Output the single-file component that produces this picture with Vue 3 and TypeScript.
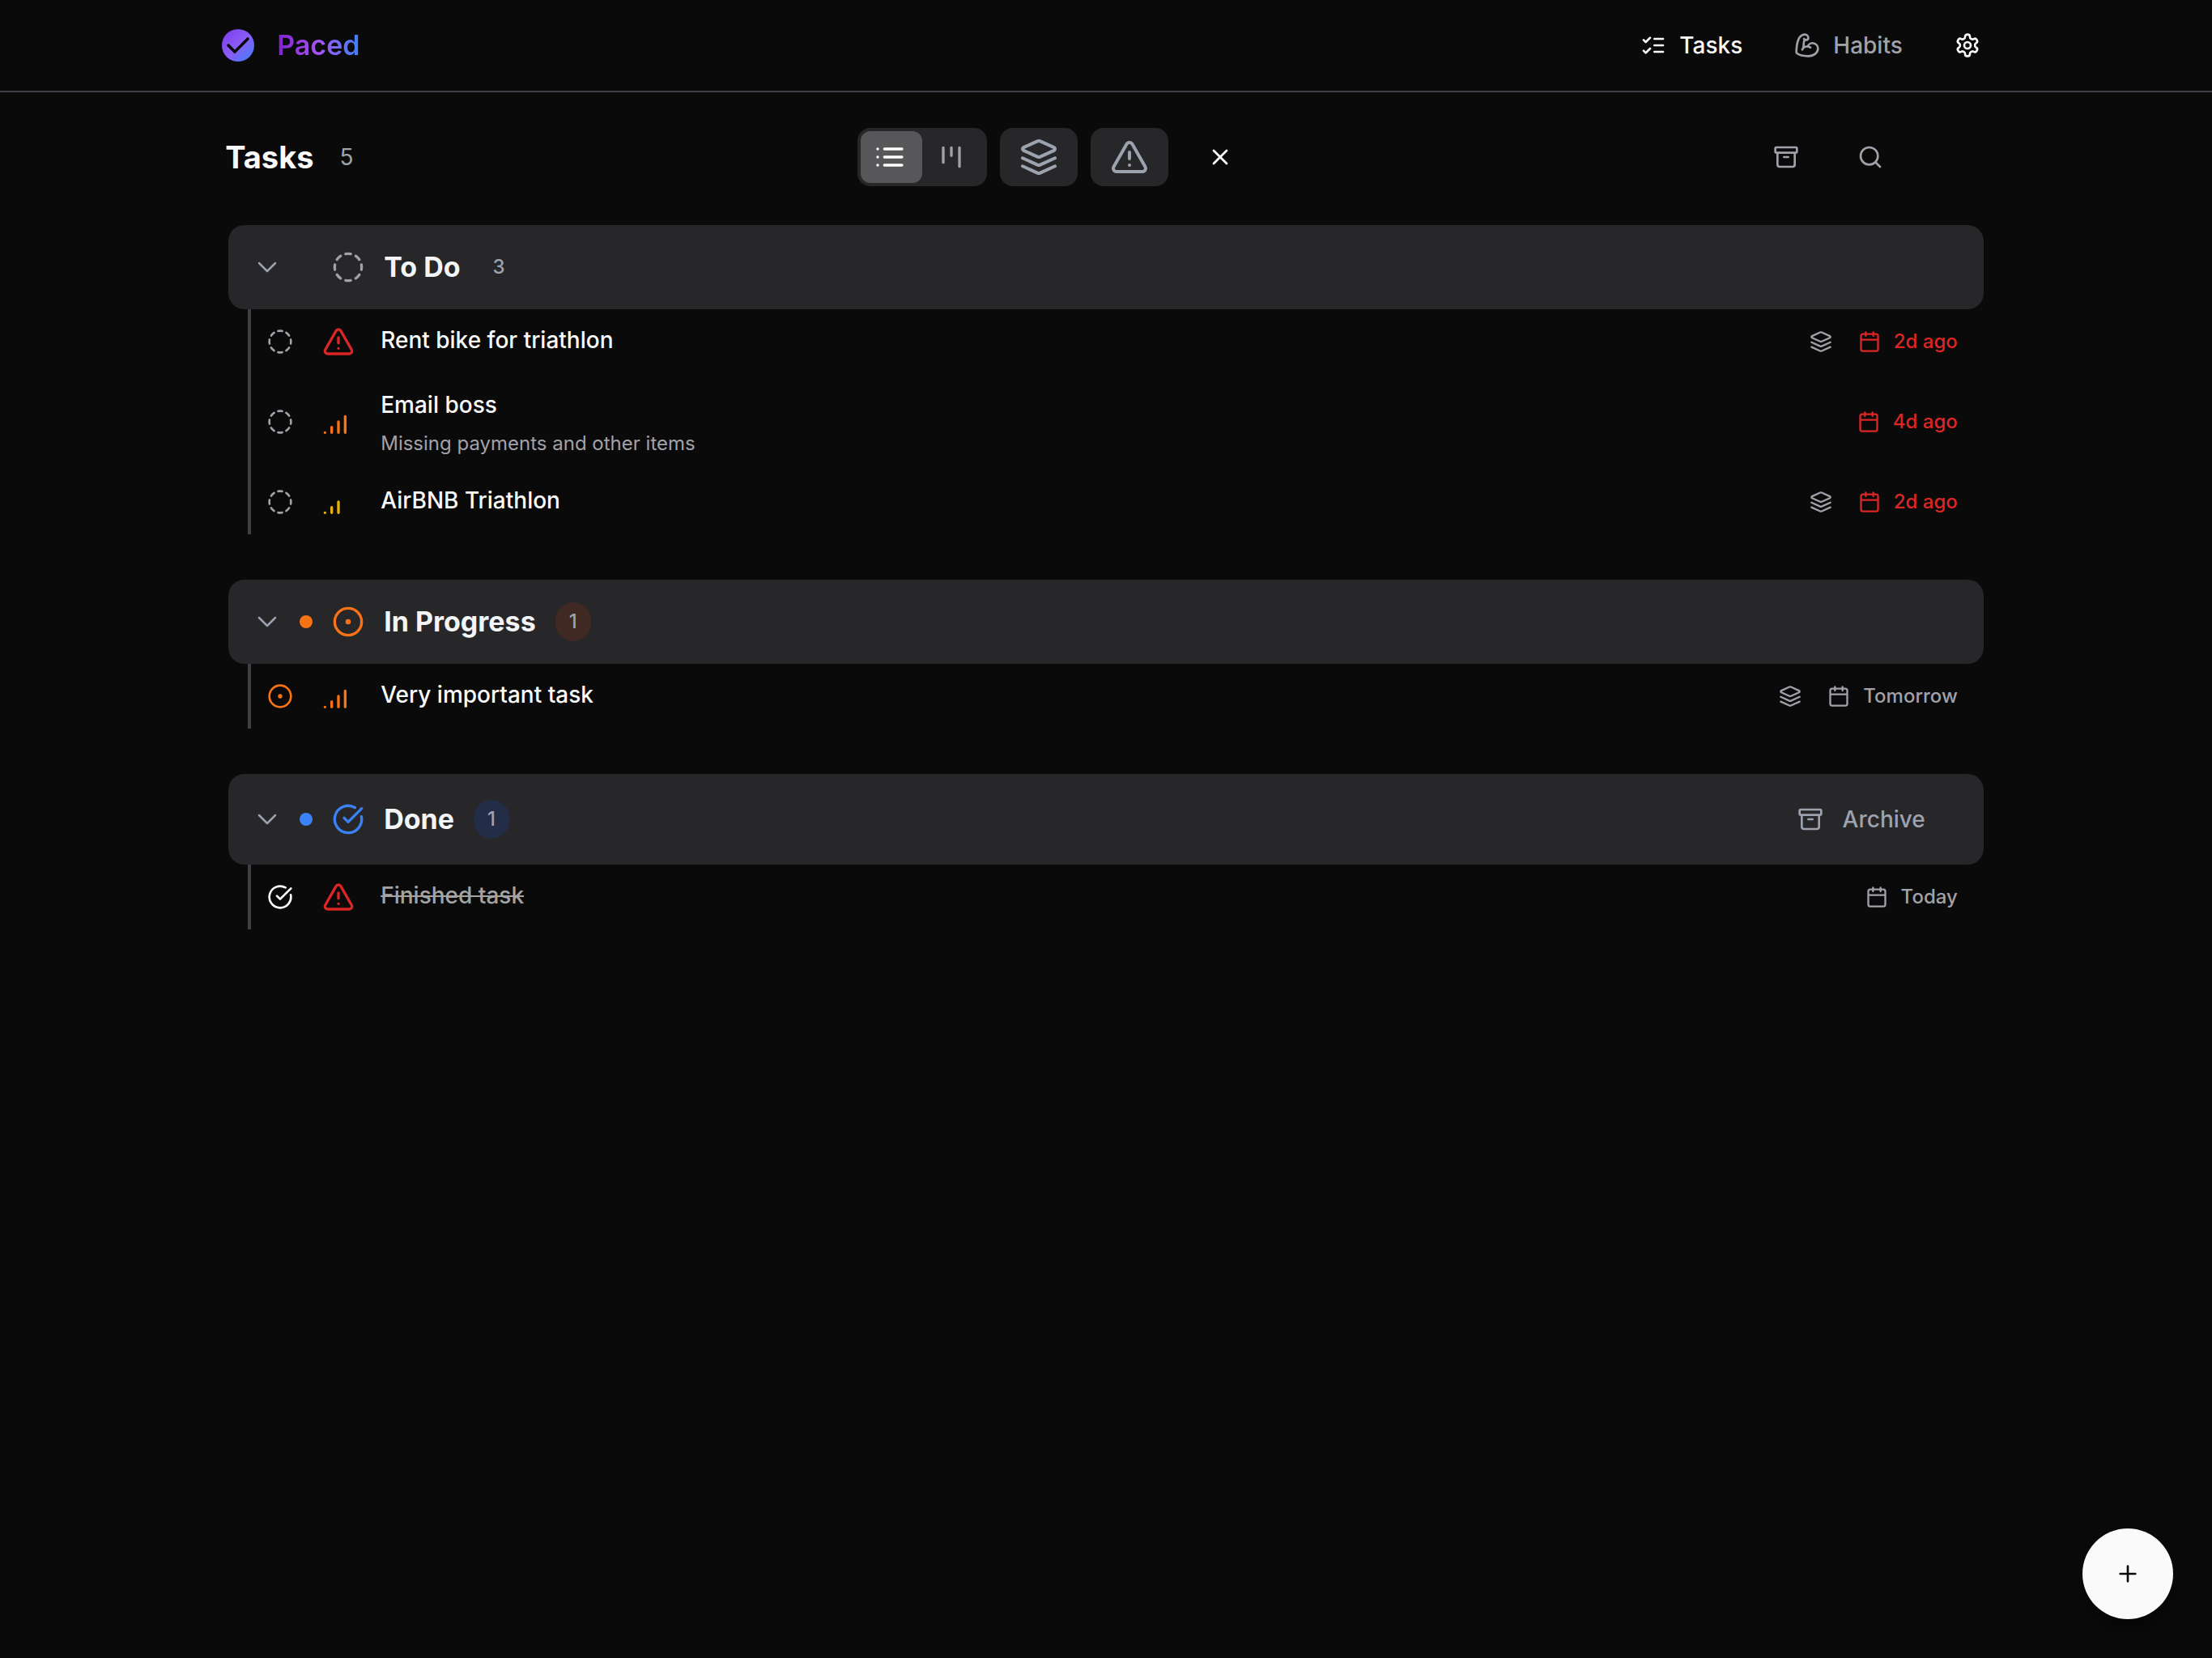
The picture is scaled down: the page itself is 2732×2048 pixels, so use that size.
<script setup lang="ts">
import { defineComponent, h, ref } from 'vue'

type IconName = keyof typeof glyphs
type Status = 'todo' | 'progress' | 'done'

interface Task {
  title: string
  note?: string
  priority: 'urgent' | 'high' | 'medium'
  grouped?: boolean
  due: string
  overdue?: boolean
}

interface Section {
  status: Status
  label: string
  icon: IconName
  tasks: Task[]
}

const glyphs = {
  listChecks: 'm3 17 2 2 4-4M3 7l2 2 4-4M13 6h8M13 12h8M13 18h8',
  biceps:
    'M12.409 13.017A5 5 0 0 1 22 15c0 3.866-4 7-9 7-4.077 0-8.153-.82-10.371-2.462-.426-.316-.631-.832-.62-1.362C2.118 12.723 2.627 2 10 2a3 3 0 0 1 3 3 2 2 0 0 1-2 2c-1.105 0-1.64-.444-2-1M15 14a5 5 0 0 0-7.584 2M9.964 6.825C8.019 7.977 9.5 13 8 15',
  settings:
    'M12.22 2h-.44a2 2 0 0 0-2 2v.18a2 2 0 0 1-1 1.73l-.43.25a2 2 0 0 1-2 0l-.15-.08a2 2 0 0 0-2.73.73l-.22.38a2 2 0 0 0 .73 2.73l.15.1a2 2 0 0 1 1 1.72v.51a2 2 0 0 1-1 1.74l-.15.09a2 2 0 0 0-.73 2.73l.22.38a2 2 0 0 0 2.73.73l.15-.08a2 2 0 0 1 2 0l.43.25a2 2 0 0 1 1 1.73V20a2 2 0 0 0 2 2h.44a2 2 0 0 0 2-2v-.18a2 2 0 0 1 1-1.73l.43-.25a2 2 0 0 1 2 0l.15.08a2 2 0 0 0 2.73-.73l.22-.39a2 2 0 0 0-.73-2.73l-.15-.08a2 2 0 0 1-1-1.74v-.5a2 2 0 0 1 1-1.74l.15-.09a2 2 0 0 0 .73-2.73l-.22-.38a2 2 0 0 0-2.73-.73l-.15.08a2 2 0 0 1-2 0l-.43-.25a2 2 0 0 1-1-1.73V4a2 2 0 0 0-2-2zM9 12a3 3 0 1 0 6 0a3 3 0 1 0-6 0',
  list: 'M3 6h.01M3 12h.01M3 18h.01M8 6h13M8 12h13M8 18h13',
  kanban: 'M6 5v11M12 5v6M18 5v14',
  layers:
    'm12.83 2.18a2 2 0 0 0-1.66 0L2.6 6.08a1 1 0 0 0 0 1.83l8.58 3.91a2 2 0 0 0 1.66 0l8.58-3.9a1 1 0 0 0 0-1.83ZM22 17.65l-9.17 4.16a2 2 0 0 1-1.66 0L2 17.65M22 12.65l-9.17 4.16a2 2 0 0 1-1.66 0L2 12.65',
  urgent:
    'm21.73 18-8-14a2 2 0 0 0-3.48 0l-8 14A2 2 0 0 0 4 21h16a2 2 0 0 0 1.73-3ZM12 9v4M12 17h.01',
  high: 'M2 20h.01M7 20v-4M12 20v-8M17 20V8',
  medium: 'M2 20h.01M7 20v-4M12 20v-8',
  close: 'M18 6 6 18M6 6l12 12',
  archive:
    'M3 3h18a1 1 0 0 1 1 1v3a1 1 0 0 1-1 1H3a1 1 0 0 1-1-1V4a1 1 0 0 1 1-1zM4 8v11a2 2 0 0 0 2 2h12a2 2 0 0 0 2-2V8M10 12h4',
  search: 'M3 11a8 8 0 1 0 16 0a8 8 0 1 0-16 0M21 21l-4.3-4.3',
  chevron: 'm6 9 6 6 6-6',
  todo:
    'M10.1 2.182a10 10 0 0 1 3.8 0M13.9 21.818a10 10 0 0 1-3.8 0M17.609 3.721a10 10 0 0 1 2.69 2.7M2.182 13.9a10 10 0 0 1 0-3.8M20.279 17.609a10 10 0 0 1-2.7 2.69M21.818 10.1a10 10 0 0 1 0 3.8M3.721 6.391a10 10 0 0 1 2.7-2.69M6.391 20.279a10 10 0 0 1-2.69-2.7',
  progress: 'M2 12a10 10 0 1 0 20 0a10 10 0 1 0-20 0M11 12a1 1 0 1 0 2 0a1 1 0 1 0-2 0',
  done: 'M21.801 10A10 10 0 1 1 17 3.335M9 11l3 3L22 4',
  calendar: 'M8 2v4M16 2v4M5 4h14a2 2 0 0 1 2 2v14a2 2 0 0 1-2 2H5a2 2 0 0 1-2-2V6a2 2 0 0 1 2-2zM3 10h18',
  plus: 'M5 12h14M12 5v14',
}

const Icon = defineComponent({
  props: {
    name: { type: String, required: true },
    size: { type: Number, default: 32 },
    stroke: { type: Number, default: 2 },
  },
  setup(props) {
    return () =>
      h(
        'svg',
        {
          width: props.size,
          height: props.size,
          viewBox: '0 0 24 24',
          fill: 'none',
          stroke: 'currentColor',
          'stroke-width': props.stroke,
          'stroke-linecap': 'round',
          'stroke-linejoin': 'round',
          'aria-hidden': 'true',
        },
        [h('path', { d: glyphs[props.name as IconName] })],
      )
  },
})

const sections: Section[] = [
  {
    status: 'todo',
    label: 'To Do',
    icon: 'todo',
    tasks: [
      { title: 'Rent bike for triathlon', priority: 'urgent', grouped: true, due: '2d ago', overdue: true },
      { title: 'Email boss', note: 'Missing payments and other items', priority: 'high', due: '4d ago', overdue: true },
      { title: 'AirBNB Triathlon', priority: 'medium', grouped: true, due: '2d ago', overdue: true },
    ],
  },
  {
    status: 'progress',
    label: 'In Progress',
    icon: 'progress',
    tasks: [{ title: 'Very important task', priority: 'high', grouped: true, due: 'Tomorrow' }],
  },
  {
    status: 'done',
    label: 'Done',
    icon: 'done',
    tasks: [{ title: 'Finished task', priority: 'urgent', due: 'Today' }],
  },
]

const total = sections.reduce((sum, s) => sum + s.tasks.length, 0)
const view = ref<'list' | 'board'>('list')
const collapsed = ref<Record<Status, boolean>>({ todo: false, progress: false, done: false })
</script>

<template>
  <div class="app">
    <header class="topbar">
      <div class="topbar-inner">
        <a class="brand" href="#">
          <svg class="brand-mark" width="40" height="40" viewBox="0 0 40 40" aria-hidden="true">
            <defs>
              <linearGradient id="brand-fill" x1="0" y1="0" x2="1" y2="1">
                <stop offset="0" stop-color="#7c3aed" />
                <stop offset="0.5" stop-color="#8b5cf6" />
                <stop offset="1" stop-color="#3b82f6" />
              </linearGradient>
            </defs>
            <circle cx="20" cy="20" r="20" fill="url(#brand-fill)" />
            <path d="M8 20 16 28 32 12" fill="none" stroke="#0a0a0a" stroke-width="3.6" stroke-linecap="round" />
          </svg>
          <span class="brand-name">Paced</span>
        </a>
        <nav class="nav">
          <a class="nav-link active" href="#tasks"><Icon name="listChecks" />Tasks</a>
          <a class="nav-link" href="#habits"><Icon name="biceps" />Habits</a>
          <button class="plain bright" type="button" aria-label="Settings"><Icon name="settings" /></button>
        </nav>
      </div>
    </header>

    <main class="main">
      <div class="toolbar">
        <div class="heading">
          <h1>Tasks</h1>
          <span class="total">{{ total }}</span>
        </div>
        <div class="filters">
          <div class="segmented">
            <button type="button" :class="{ on: view === 'list' }" aria-label="List view" @click="view = 'list'">
              <Icon name="list" :size="40" />
            </button>
            <button type="button" :class="{ on: view === 'board' }" aria-label="Board view" @click="view = 'board'">
              <Icon name="kanban" :size="40" />
            </button>
          </div>
          <button class="filter" type="button" aria-label="Filter by group"><Icon name="layers" :size="48" /></button>
          <button class="filter" type="button" aria-label="Filter by priority"><Icon name="urgent" :size="48" /></button>
          <button class="filter clear" type="button" aria-label="Clear filters"><Icon name="close" /></button>
        </div>
        <div class="actions">
          <button class="plain" type="button" aria-label="Archived tasks"><Icon name="archive" /></button>
          <button class="plain" type="button" aria-label="Search"><Icon name="search" /></button>
        </div>
      </div>

      <section v-for="s in sections" :key="s.status" class="section" :class="s.status">
        <div class="section-head">
          <button
            class="plain toggle"
            type="button"
            :aria-label="`Toggle ${s.label}`"
            @click="collapsed[s.status] = !collapsed[s.status]"
          >
            <Icon name="chevron" :size="40" :stroke="1.5" />
          </button>
          <span class="dot"></span>
          <Icon class="section-icon" :name="s.icon" :size="40" />
          <h2>{{ s.label }}</h2>
          <span class="count">{{ s.tasks.length }}</span>
          <button v-if="s.status === 'done'" class="plain archive" type="button"><Icon name="archive" />Archive</button>
        </div>
        <ul v-if="!collapsed[s.status]" class="tasks">
          <li v-for="t in s.tasks" :key="t.title" class="task">
            <button class="plain status" type="button" :aria-label="`Change status of ${t.title}`">
              <Icon :name="s.icon" />
            </button>
            <Icon class="priority" :class="t.priority" :name="t.priority" :size="40" />
            <div class="task-body" :class="{ noted: t.note }">
              <span class="task-title">{{ t.title }}</span>
              <span v-if="t.note" class="task-note">{{ t.note }}</span>
            </div>
            <Icon v-if="t.grouped" class="grouped" name="layers" :size="28" />
            <span class="due" :class="{ overdue: t.overdue }"><Icon name="calendar" :size="28" />{{ t.due }}</span>
          </li>
        </ul>
      </section>
    </main>

    <button class="fab" type="button" aria-label="Add task"><Icon name="plus" /></button>
  </div>
</template>

<style>
body {
  background: #0a0a0a;
}
</style>

<style scoped>
.app {
  min-height: 100vh;
  background: #0a0a0a;
  color: #fafafa;
  font-family: Inter, 'Liberation Sans', sans-serif;
  font-size: 28px;
  line-height: 40px;
}

.app * {
  box-sizing: border-box;
}

svg {
  display: block;
  flex: none;
}

a {
  color: inherit;
  text-decoration: none;
}

button {
  display: flex;
  align-items: center;
  justify-content: center;
  margin: 0;
  padding: 0;
  border: 0;
  background: none;
  color: inherit;
  font: inherit;
  cursor: pointer;
}

h1,
h2 {
  margin: 0;
}

.plain {
  color: #a1a1aa;
}

.topbar {
  border-bottom: 2px solid #3f3f46;
}

.topbar-inner {
  display: flex;
  align-items: center;
  justify-content: space-between;
  width: 80%;
  height: 112px;
  margin: 0 auto;
  padding: 0 13px 0 1px;
}

.brand {
  display: flex;
  align-items: center;
  gap: 28px;
}

.brand-name {
  background: linear-gradient(to right, #7e22ce, #a855f7, #3b82f6);
  background-clip: text;
  color: transparent;
  font-size: 34px;
  font-weight: 600;
}

.nav {
  display: flex;
  align-items: center;
  gap: 64px;
}

.nav-link {
  display: flex;
  align-items: center;
  gap: 16px;
  color: #a1a1aa;
  font-weight: 500;
}

.nav-link.active,
.bright {
  color: #fafafa;
}

.main {
  width: 80%;
  margin: 0 auto;
  padding: 0 9px 160px;
}

.toolbar {
  display: flex;
  align-items: center;
  justify-content: space-between;
  height: 72px;
  margin: 44px -8px 48px;
}

.heading {
  display: flex;
  align-items: center;
  gap: 32px;
  padding: 0 20px 0 4px;
}

h1 {
  font-size: 38px;
  font-weight: 700;
}

.total {
  color: #a1a1aa;
}

.filters {
  display: flex;
  gap: 16px;
}

.segmented {
  display: flex;
  padding: 4px;
  border-radius: 16px;
  background: #27272a;
}

.segmented button {
  padding: 0 20px 0 16px;
  height: 64px;
  border-radius: 12px;
  color: #a1a1aa;
}

.segmented .on {
  background: #575759;
  color: #fff;
}

.filter {
  width: 96px;
  height: 72px;
  border-radius: 16px;
  background: #27272a;
  color: #9ca3af;
}

.filter.clear {
  background: none;
  color: #fff;
}

.actions {
  display: flex;
  gap: 8px;
  padding-right: 100px;
}

.actions button {
  width: 96px;
  height: 72px;
}

.section {
  margin-bottom: 56px;
}

.section-head {
  display: flex;
  align-items: center;
  min-height: 104px;
  padding: 0 72px 0 28px;
  border-radius: 20px;
  background: #27272a;
}

.done .section-head {
  min-height: 112px;
}

.toggle {
  color: #9ca3af;
}

.dot {
  width: 16px;
  height: 16px;
  margin: 0 24px 0 20px;
  border-radius: 50%;
}

.section-icon {
  margin-right: 24px;
  color: #a1a1aa;
}

.progress .dot {
  background: #f97316;
}

.progress .section-icon,
.progress .status {
  color: #f97316;
}

.done .dot {
  background: #3b82f6;
}

.done .section-icon {
  color: #3b82f6;
}

.done .status {
  color: #fafafa;
}

h2 {
  color: #f3f4f6;
  font-size: 34px;
  font-weight: 700;
}

.count {
  min-width: 44px;
  margin-left: 24px;
  padding: 8px 16px;
  border-radius: 24px;
  color: #9ca3af;
  font-size: 24px;
  font-weight: 500;
  line-height: 32px;
  text-align: center;
}

.progress .count {
  background: #402923;
}

.done .count {
  background: #242d47;
}

.archive {
  gap: 24px;
  margin-left: auto;
  color: #9ca3af;
  font-weight: 500;
}

.tasks {
  margin: 0 0 0 24px;
  padding: 0;
  border-left: 4px solid #3f3f46;
  list-style: none;
}

.task {
  display: flex;
  align-items: center;
  min-height: 80px;
  padding: 16px 32px 16px 20px;
}

.priority {
  margin: 0 32px 0 36px;
}

.urgent {
  color: #dc2626;
}

.high {
  color: #f97316;
}

.medium {
  color: #eab308;
}

.task-body {
  display: flex;
  flex: 1;
  flex-direction: column;
  gap: 12px;
  padding-bottom: 4px;
}

.task-body.noted {
  padding: 2px 0 0;
}

.task-title {
  font-weight: 500;
}

.done .task-title {
  align-self: flex-start;
  color: #a3a3a3;
  text-decoration: line-through;
}

.task-note {
  color: #a1a1aa;
  font-size: 24px;
  line-height: 32px;
}

.grouped {
  margin-right: 32px;
  color: #a1a1aa;
}

.due {
  display: flex;
  align-items: center;
  gap: 16px;
  color: #a1a1aa;
  font-size: 24px;
  font-weight: 500;
  line-height: 32px;
}

.due.overdue {
  color: #dc2626;
}

.fab {
  position: fixed;
  right: 48px;
  bottom: 48px;
  width: 112px;
  height: 112px;
  border-radius: 50%;
  background: #fafafa;
  box-shadow: 0 16px 20px -4px rgba(0, 0, 0, 0.4);
  color: #0a0a0a;
}
</style>
